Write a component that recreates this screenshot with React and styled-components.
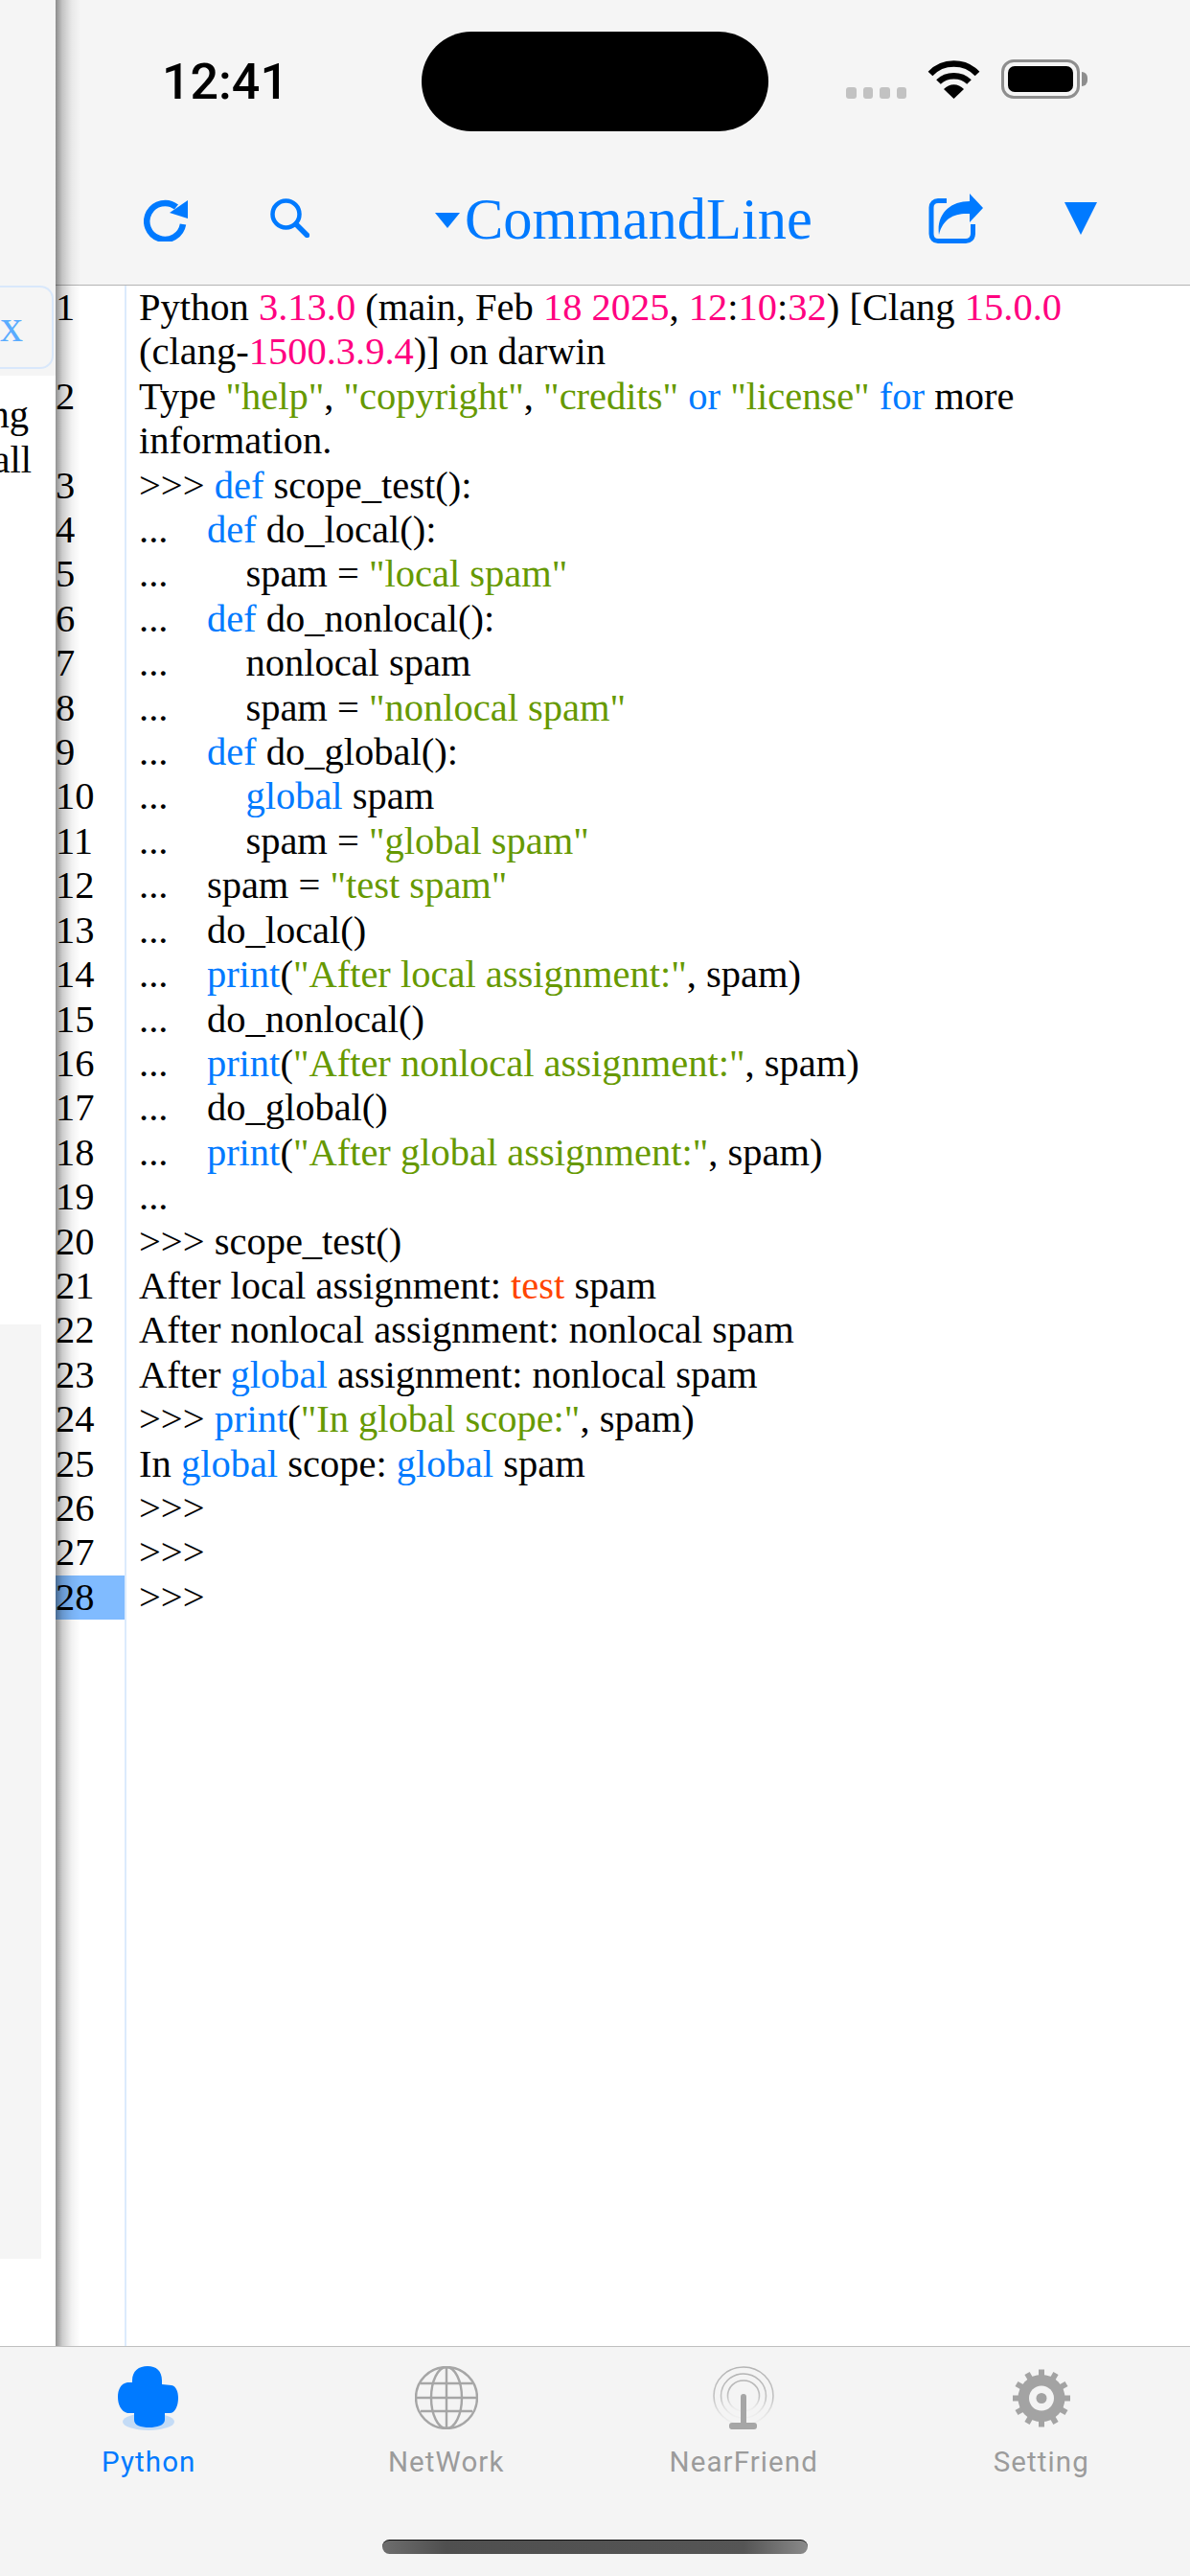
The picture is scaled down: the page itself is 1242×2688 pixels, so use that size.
import React from "react";
import styled, { createGlobalStyle } from "styled-components";

const BLUE = "#007aff";

const GlobalStyle = createGlobalStyle`
  html, body {
    margin: 0;
    padding: 0;
    background: #fff;
  }
  * {
    box-sizing: border-box;
  }
`;

// k = keyword, n = number, s = string, w = warning
const LINES = [
  [["", "Python "], ["n", "3.13.0"], ["", " (main, Feb "], ["n", "18 2025"], ["", ", "], ["n", "12"], ["", ":"], ["n", "10"], ["", ":"], ["n", "32"], ["", ") [Clang "], ["n", "15.0.0"], ["", " (clang-"], ["n", "1500.3.9.4"], ["", ")] on darwin"]],
  [["", "Type "], ["s", '"help"'], ["", ", "], ["s", '"copyright"'], ["", ", "], ["s", '"credits"'], ["", " "], ["k", "or"], ["", " "], ["s", '"license"'], ["", " "], ["k", "for"], ["", " more information."]],
  [["", ">>> "], ["k", "def"], ["", " scope_test():"]],
  [["", "...    "], ["k", "def"], ["", " do_local():"]],
  [["", "...        spam = "], ["s", '"local spam"']],
  [["", "...    "], ["k", "def"], ["", " do_nonlocal():"]],
  [["", "...        nonlocal spam"]],
  [["", "...        spam = "], ["s", '"nonlocal spam"']],
  [["", "...    "], ["k", "def"], ["", " do_global():"]],
  [["", "...        "], ["k", "global"], ["", " spam"]],
  [["", "...        spam = "], ["s", '"global spam"']],
  [["", "...    spam = "], ["s", '"test spam"']],
  [["", "...    do_local()"]],
  [["", "...    "], ["k", "print"], ["", "("], ["s", '"After local assignment:"'], ["", ", spam)"]],
  [["", "...    do_nonlocal()"]],
  [["", "...    "], ["k", "print"], ["", "("], ["s", '"After nonlocal assignment:"'], ["", ", spam)"]],
  [["", "...    do_global()"]],
  [["", "...    "], ["k", "print"], ["", "("], ["s", '"After global assignment:"'], ["", ", spam)"]],
  [["", "..."]],
  [["", ">>> scope_test()"]],
  [["", "After local assignment: "], ["w", "test"], ["", " spam"]],
  [["", "After nonlocal assignment: nonlocal spam"]],
  [["", "After "], ["k", "global"], ["", " assignment: nonlocal spam"]],
  [["", ">>> "], ["k", "print"], ["", "("], ["s", '"In global scope:"'], ["", ", spam)"]],
  [["", "In "], ["k", "global"], ["", " scope: "], ["k", "global"], ["", " spam"]],
  [["", ">>>"]],
  [["", ">>>"]],
  [["", ">>>"]],
];

const TOKEN_COLORS = { k: BLUE, n: "#ff0080", s: "#669900", w: "#ff4500" };

function RefreshIcon() {
  return (
    <svg width="47" height="47" viewBox="0 0 47 47" fill="none">
      <path d="M34 11A19 19 0 1 0 41 29" stroke={BLUE} strokeWidth="6.500" />
      <path d="M46 4V23L27 17Z" fill={BLUE} />
    </svg>
  );
}

function ShareIcon() {
  return (
    <svg width="57" height="53" viewBox="0 0 57 53" fill="none">
      <path
        d="M19 7.500H10C6 7.500 3 10.500 3 14.500V42C3 46.500 6 49.500 10 49.500H39C43 49.500 46.500 46.500 46.500 42V32"
        stroke={BLUE}
        strokeWidth="5"
      />
      <path d="M43 0L57 15L43 30V21C27 20 15 26 11 43C8 22 22 8 43 8Z" fill={BLUE} />
    </svg>
  );
}

function GlobeIcon() {
  return (
    <svg width="66" height="66" viewBox="0 0 66 66" fill="none" stroke="#a6a6a6" strokeWidth="2.400">
      <ellipse cx="33" cy="33" rx="32" ry="32" />
      <ellipse cx="33" cy="33" rx="16" ry="32" />
      <path d="M33 1v64M1 33h64M6 18h54M6 47h54" />
    </svg>
  );
}

function AntennaIcon() {
  return (
    <svg width="64" height="66" viewBox="0 0 64 66" fill="none">
      <defs>
        <linearGradient id="waves" x1="0" y1="0" x2="0" y2="1">
          <stop offset="0" stopColor="#b4b4b4" />
          <stop offset="0.55" stopColor="#c4c4c4" />
          <stop offset="1" stopColor="#e8e8e8" stopOpacity="0.3" />
        </linearGradient>
      </defs>
      <g stroke="url(#waves)" strokeWidth="1.600">
        <ellipse cx="32" cy="31" rx="31" ry="30" />
        <ellipse cx="32" cy="31" rx="23.500" ry="23" />
        <ellipse cx="32" cy="31" rx="16.500" ry="16" />
      </g>
      <path d="M29 60V32a3 3 0 0 1 6 0V60Z" fill="#a6a6a6" />
      <rect x="17" y="59" width="29" height="7" rx="3" fill="#a6a6a6" />
    </svg>
  );
}

function GearIcon() {
  const teeth = Array.from({ length: 12 }, (_, i) => i * 30);
  return (
    <svg width="60" height="61" viewBox="0 0 60 60">
      {teeth.map((deg) => (
        <rect key={deg} x="27" y="0" width="6" height="9" fill="#a3a3a3" transform={`rotate(${deg} 30 30)`} />
      ))}
      <circle cx="30" cy="30" r="24.500" fill="#a3a3a3" />
      <circle cx="30" cy="30" r="13" fill="#f4f4f4" />
      <circle cx="30" cy="30" r="5.500" fill="#a3a3a3" />
    </svg>
  );
}

function PythonIcon() {
  return (
    <svg width="64" height="67" viewBox="0 0 64 67">
      <ellipse cx="32" cy="58" rx="27" ry="9" fill="#007aff" opacity="0.2" />
      <path
        d="M15 15C15 5 22 0 31 0C40 0 46 5 46 15L46 19L56 20C61 21 63 27 63 33C63 41 60 49 54 49L49 49L49 56C49 62 40 64 33 64C24 64 17 62 17 56L17 49L10 49C3 47 0 40 0 32C0 25 3 18 10 17L15 17Z"
        fill={BLUE}
      />
    </svg>
  );
}

const TABS = [
  { label: "Python", icon: <PythonIcon />, active: true },
  { label: "NetWork", icon: <GlobeIcon /> },
  { label: "NearFriend", icon: <AntennaIcon /> },
  { label: "Setting", icon: <GearIcon /> },
];

function App() {
  return (
    <Page>
      <GlobalStyle />
      <Body>
        <Underlay>
          <UnderlayHead>
            <ClippedButton>x</ClippedButton>
          </UnderlayHead>
          <UnderlayLine $inset={28}>ng</UnderlayLine>
          <UnderlayLine $inset={25}>all</UnderlayLine>
          <UnderlayPanel />
        </Underlay>
        <Main>
          <EdgeShadow />
          <Header>
            <StatusBar>
              <Time>12:41</Time>
              <Island />
              <StatusIcons>
                <SignalDots>
                  <Dot />
                  <Dot />
                  <Dot />
                  <Dot />
                </SignalDots>
                <svg width="55" height="41" viewBox="0 0 55 41" fill="none" stroke="#000" strokeWidth="6.500">
                  <path d="M3 15C16 1 39 1 52 15" />
                  <path d="M11.500 23.500C20 15 35 15 43.500 23.500" />
                  <path d="M27.500 41L17 31C23 24.500 32 24.500 38 31Z" fill="#000" stroke="none" />
                </svg>
                <Battery>
                  <BatteryFill />
                </Battery>
                <BatteryNub />
              </StatusIcons>
            </StatusBar>
            <Toolbar>
              <ToolIcon $gap={92} $top={3}>
                <RefreshIcon />
              </ToolIcon>
              <ToolIcon $gap={85} $top={5}>
                <svg width="41" height="41" viewBox="0 0 41 41" fill="none" stroke={BLUE} strokeLinecap="round">
                  <circle cx="16.500" cy="16.500" r="14" strokeWidth="4.500" />
                  <path d="M27 27L38.500 38.500" strokeWidth="5.500" />
                </svg>
              </ToolIcon>
              <TitleCaret />
              <Title>CommandLine</Title>
              <ToolIcon $gap={120}>
                <ShareIcon />
              </ToolIcon>
              <MenuCaret />
            </Toolbar>
          </Header>
          <Editor>
            {LINES.map((tokens, i) => (
              <Row key={i}>
                <LineNo $current={i === LINES.length - 1}>{i + 1}</LineNo>
                <Code>
                  {tokens.map(([kind, text], j) => (
                    <Token key={j} $color={TOKEN_COLORS[kind]}>
                      {text}
                    </Token>
                  ))}
                </Code>
              </Row>
            ))}
            <GutterRest />
          </Editor>
        </Main>
      </Body>
      <TabBar>
        <Tabs>
          {TABS.map((tab) => (
            <Tab key={tab.label}>
              <TabIcon>{tab.icon}</TabIcon>
              <TabLabel $active={tab.active}>{tab.label}</TabLabel>
            </Tab>
          ))}
        </Tabs>
        <HomeBar />
      </TabBar>
    </Page>
  );
}

const Page = styled.div`
  width: 1242px;
  height: 2688px;
  display: flex;
  flex-direction: column;
  overflow: hidden;
  background: #fff;
`;

const Body = styled.div`
  flex: 1;
  min-height: 0;
  display: flex;
`;

const Underlay = styled.div`
  width: 58px;
  flex: none;
  display: flex;
  flex-direction: column;
  overflow: hidden;
  font-family: "Liberation Serif", serif;
  font-size: 40.500px;
  line-height: 47px;
  color: #000;
`;

const UnderlayHead = styled.div`
  height: 392px;
  flex: none;
  padding-top: 298px;
  margin-bottom: 17px;
  background: #f5f5f5;
`;

const ClippedButton = styled.div`
  height: 87px;
  width: 56px;
  border: 2px solid #d9e8fb;
  border-left: none;
  border-radius: 0 14px 14px 0;
  color: #5aacff;
  font-size: 48px;
  line-height: 80px;
`;

const UnderlayLine = styled.div`
  display: flex;
  justify-content: flex-end;
  padding-right: ${(p) => p.$inset}px;
  white-space: nowrap;
`;

const UnderlayPanel = styled.div`
  width: 43px;
  height: 975px;
  margin-top: 879px;
  background: #f5f5f5;
`;

const Main = styled.div`
  flex: 1;
  min-width: 0;
  position: relative;
  display: flex;
  flex-direction: column;
`;

const EdgeShadow = styled.div`
  position: absolute;
  top: 0;
  bottom: 0;
  left: 0;
  width: 26px;
  z-index: 2;
  pointer-events: none;
  background: linear-gradient(to right, rgba(0, 0, 0, 0.43), rgba(0, 0, 0, 0.2) 27%, rgba(0, 0, 0, 0.05) 65%, rgba(0, 0, 0, 0));
`;

const Header = styled.header`
  height: 298px;
  flex: none;
  display: flex;
  flex-direction: column;
  background: #f5f5f5;
  border-bottom: 1px solid #b4b4b4;
`;

const StatusBar = styled.div`
  height: 137px;
  flex: none;
  padding: 33px 0 0 111px;
  display: flex;
  align-items: flex-start;
`;

const Time = styled.div`
  width: 271px;
  padding-top: 22px;
  font-family: Roboto, sans-serif;
  font-weight: 500;
  font-size: 52px;
  line-height: 62px;
  color: #000;
`;

const Island = styled.div`
  width: 362px;
  height: 104px;
  flex: none;
  border-radius: 52px;
  background: #000;
`;

const StatusIcons = styled.div`
  margin: 29px 0 0 81px;
  height: 41px;
  display: flex;
  align-items: flex-end;
`;

const SignalDots = styled.div`
  display: flex;
  gap: 7px;
  margin-right: 22px;
`;

const Dot = styled.span`
  width: 10.500px;
  height: 12px;
  border-radius: 3px;
  background: #c2c2c2;
`;

const Battery = styled.div`
  width: 82px;
  height: 41px;
  margin-left: 22px;
  padding: 4px;
  border: 3px solid #8e8e8e;
  border-radius: 13px;
`;

const BatteryFill = styled.div`
  width: 100%;
  height: 100%;
  border-radius: 7px;
  background: #000;
`;

const BatteryNub = styled.span`
  width: 6px;
  height: 15px;
  margin: 0 0 13px 2px;
  border-radius: 0 6px 6px 0;
  background: #8e8e8e;
`;

const Toolbar = styled.div`
  flex: 1;
  display: flex;
  align-items: flex-start;
  padding-top: 65px;
`;

const ToolIcon = styled.div`
  display: flex;
  margin-left: ${(p) => p.$gap}px;
  margin-top: ${(p) => p.$top || 0}px;
`;

const TitleCaret = styled.span`
  width: 0;
  height: 0;
  margin: 20px 5px 0 131px;
  border-left: 13.500px solid transparent;
  border-right: 13.500px solid transparent;
  border-top: 16px solid ${BLUE};
`;

const Title = styled.div`
  width: 364px;
  margin-top: -9px;
  font-family: "Liberation Serif", serif;
  font-size: 60.500px;
  line-height: 72px;
  color: ${BLUE};
`;

const MenuCaret = styled.span`
  width: 0;
  height: 0;
  margin: 9px 0 0 85px;
  border-left: 17.500px solid transparent;
  border-right: 17.500px solid transparent;
  border-top: 34px solid ${BLUE};
`;

const Editor = styled.main`
  flex: 1;
  min-height: 0;
  display: flex;
  flex-direction: column;
  font-family: "Liberation Serif", serif;
  font-size: 40.500px;
  line-height: 46.400px;
  color: #000;
`;

const Row = styled.div`
  display: flex;
`;

const LineNo = styled.div`
  width: 74px;
  flex: none;
  border-right: 2px solid #dcebfc;
  background: ${(p) => (p.$current ? "#80bbff" : "transparent")};
`;

const Code = styled.div`
  flex: 1;
  min-width: 0;
  padding: 0 30px 0 13px;
  white-space: pre-wrap;
`;

const Token = styled.span`
  color: ${(p) => p.$color || "inherit"};
`;

const GutterRest = styled.div`
  flex: 1;
  width: 74px;
  border-right: 2px solid #dcebfc;
`;

const TabBar = styled.nav`
  height: 240px;
  flex: none;
  display: flex;
  flex-direction: column;
  align-items: center;
  background: #f4f4f4;
  border-top: 1px solid #c0c0c0;
`;

const Tabs = styled.div`
  width: 100%;
  display: grid;
  grid-template-columns: repeat(4, 1fr);
  padding-top: 19px;
`;

const Tab = styled.div`
  display: flex;
  flex-direction: column;
  align-items: center;
`;

const TabIcon = styled.div`
  height: 68px;
  display: flex;
  align-items: center;
`;

const TabLabel = styled.div`
  margin-top: 16px;
  font-family: Roboto, sans-serif;
  font-size: 29.500px;
  line-height: 34px;
  letter-spacing: 1.100px;
  color: ${(p) => (p.$active ? BLUE : "#9b9b9b")};
`;

const HomeBar = styled.div`
  width: 444px;
  height: 15px;
  margin-top: 64px;
  border-radius: 8px;
  background: linear-gradient(to right, #6e6e6e, #4f4f4f 15%, #555 85%, #8a8a8a);
  border-top: 1px solid #111;
`;

export default App;
